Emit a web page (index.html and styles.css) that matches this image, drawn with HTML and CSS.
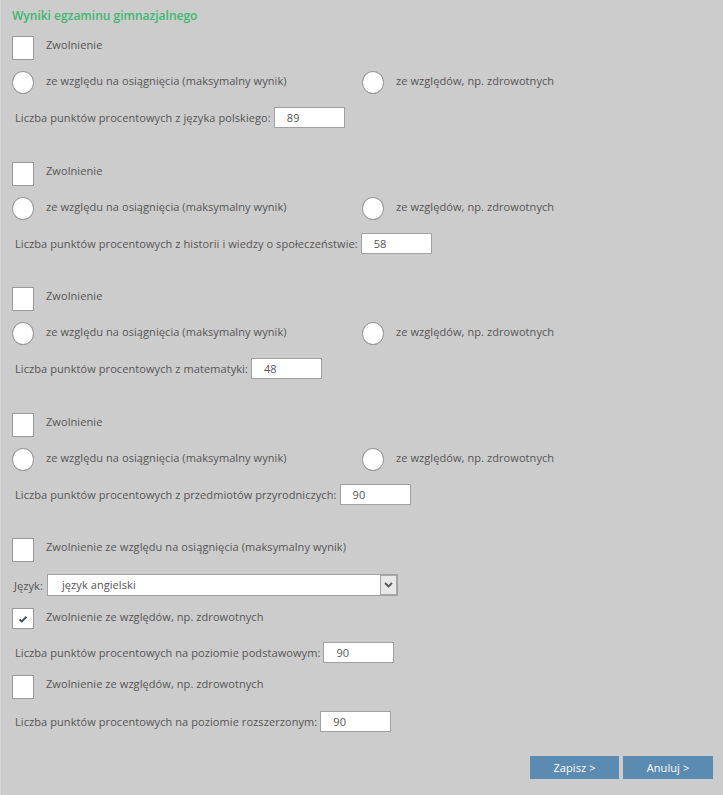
FILE: index.html
```html
<!DOCTYPE html>
<html lang="pl">
<head>
<meta charset="utf-8">
<link rel="stylesheet" href="styles.css">
</head>
<body>
<div class="page">
  <div class="title">Wyniki egzaminu gimnazjalnego</div>

  <div class="group">
    <div class="row cb-row"><span class="cb"></span><span class="lbl">Zwolnienie</span></div>
    <div class="row radio-row">
      <div class="opt"><span class="radio"></span><span class="lbl">ze względu na osiągnięcia (maksymalny wynik)</span></div>
      <div class="opt"><span class="radio"></span><span class="lbl">ze względów, np. zdrowotnych</span></div>
    </div>
    <div class="row in-row"><span class="txt">Liczba punktów procentowych z języka polskiego:</span><span class="inp">89</span></div>
  </div>

  <div class="group">
    <div class="row cb-row"><span class="cb"></span><span class="lbl">Zwolnienie</span></div>
    <div class="row radio-row">
      <div class="opt"><span class="radio"></span><span class="lbl">ze względu na osiągnięcia (maksymalny wynik)</span></div>
      <div class="opt"><span class="radio"></span><span class="lbl">ze względów, np. zdrowotnych</span></div>
    </div>
    <div class="row in-row"><span class="txt">Liczba punktów procentowych z historii i wiedzy o społeczeństwie:</span><span class="inp">58</span></div>
  </div>

  <div class="group">
    <div class="row cb-row"><span class="cb"></span><span class="lbl">Zwolnienie</span></div>
    <div class="row radio-row">
      <div class="opt"><span class="radio"></span><span class="lbl">ze względu na osiągnięcia (maksymalny wynik)</span></div>
      <div class="opt"><span class="radio"></span><span class="lbl">ze względów, np. zdrowotnych</span></div>
    </div>
    <div class="row in-row"><span class="txt">Liczba punktów procentowych z matematyki:</span><span class="inp">48</span></div>
  </div>

  <div class="group">
    <div class="row cb-row"><span class="cb"></span><span class="lbl">Zwolnienie</span></div>
    <div class="row radio-row">
      <div class="opt"><span class="radio"></span><span class="lbl">ze względu na osiągnięcia (maksymalny wynik)</span></div>
      <div class="opt"><span class="radio"></span><span class="lbl">ze względów, np. zdrowotnych</span></div>
    </div>
    <div class="row in-row"><span class="txt">Liczba punktów procentowych z przedmiotów przyrodniczych:</span><span class="inp">90</span></div>
  </div>

  <div class="group last">
    <div class="row cb-row"><span class="cb"></span><span class="lbl">Zwolnienie ze względu na osiągnięcia (maksymalny wynik)</span></div>
    <div class="row sel-row">
      <span class="txt">Język:</span>
      <div class="select"><span class="sel-text">język angielski</span><span class="sel-arrow"><svg width="9" height="6" viewBox="0 0 9 6"><path d="M1 1 L4.5 4.5 L8 1" fill="none" stroke="#555" stroke-width="1.8"/></svg></span></div>
    </div>
    <div class="row cb-row checked-row"><span class="cb checked"><svg width="10" height="8" viewBox="0 0 10 8"><path d="M1.5 4.5 L3.8 6.5 L8.5 1.8" fill="none" stroke="#474d5c" stroke-width="2"/></svg></span><span class="lbl">Zwolnienie ze względów, np. zdrowotnych</span></div>
    <div class="row in-row after-check"><span class="txt">Liczba punktów procentowych na poziomie podstawowym:</span><span class="inp">90</span></div>
    <div class="row cb-row plain-cb"><span class="cb"></span><span class="lbl">Zwolnienie ze względów, np. zdrowotnych</span></div>
    <div class="row in-row after-cb"><span class="txt">Liczba punktów procentowych na poziomie rozszerzonym:</span><span class="inp">90</span></div>
  </div>

  <div class="buttons">
    <span class="btn">Zapisz &gt;</span>
    <span class="btn wide">Anuluj &gt;</span>
  </div>
</div>
</body>
</html>
```
FILE: styles.css
```css
html, body {
  margin: 0;
  padding: 0;
  background: #cccccc;
}
.page {
  width: 723px;
  height: 795px;
  box-sizing: border-box;
  border-left: 1px solid #d6d6d6;
  padding: 9px 0 0 11px;
  font-family: "Open Sans", "DejaVu Sans", sans-serif;
  font-size: 11px;
  letter-spacing: 0.08px;
  color: #555555;
}
.title {
  font-size: 12px;
  font-weight: 600;
  color: #3cb96e;
  line-height: 14px;
  height: 14px;
  letter-spacing: 0;
}
.group {
  margin-top: 13px;
  margin-bottom: 33.5px;
}
.row {
  display: flex;
  align-items: flex-start;
}
.cb {
  width: 20px;
  height: 22px;
  border: 1px solid #999999;
  background: #ffffff;
  flex: none;
  display: flex;
  align-items: center;
  justify-content: center;
}
.cb.checked {
  height: 19px;
}
.lbl {
  margin-left: 12px;
  padding-top: 1px;
  line-height: 15px;
}
.radio-row {
  margin-top: 11px;
}
.opt {
  width: 350px;
  display: flex;
  align-items: flex-start;
}
.radio {
  width: 20px;
  height: 21px;
  border: 1px solid #999999;
  border-radius: 50%;
  background: #ffffff;
  flex: none;
}
.radio + .lbl {
  padding-top: 2px;
}
.in-row {
  margin-top: 13px;
  align-items: center;
  padding-left: 3px;
}
.txt {
  line-height: 15px;
}
.inp {
  margin-left: 3px;
  width: 57px;
  height: 19px;
  border: 1px solid #a0a0a0;
  background: #ffffff;
  padding-left: 12px;
  line-height: 19px;
  color: #555555;
}
.group.last {
  margin-bottom: 0;
}
.sel-row {
  margin-top: 12px;
  align-items: center;
  padding-left: 2px;
}
.select {
  margin-left: 4px;
  width: 349px;
  height: 20px;
  border: 1px solid #a0a0a0;
  background: #ffffff;
  display: flex;
  align-items: stretch;
}
.sel-text {
  flex: 1;
  padding-left: 14px;
  line-height: 20px;
}
.sel-arrow {
  width: 15px;
  border: 1px solid #a8a8a8;
  background: #e8e8e8;
  display: flex;
  align-items: center;
  justify-content: center;
}
.checked-row {
  margin-top: 12px;
}
.in-row.after-check {
  margin-top: 13px;
}
.plain-cb {
  margin-top: 12px;
}
.in-row.after-cb {
  margin-top: 12px;
}
.buttons {
  display: flex;
  justify-content: flex-end;
  gap: 4px;
  margin-top: 24px;
  padding-right: 10px;
}
.btn {
  width: 89px;
  height: 23px;
  line-height: 23px;
  background: #5b8bb1;
  color: #ffffff;
  text-align: center;
  font-size: 11px;
}
.btn.wide {
  width: 90px;
}
```
